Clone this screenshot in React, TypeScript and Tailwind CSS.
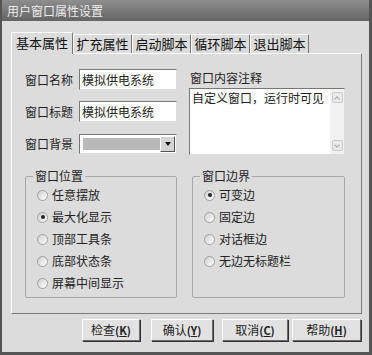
const font = { fontFamily: '"Noto Sans CJK SC", "Liberation Sans", sans-serif' };

function Radio({ label, checked }: { label: string; checked?: boolean }) {
    return (
        <div className="flex items-center h-[22px]">
            <div className="w-[11px] h-[11px] rounded-full border border-[#a0a0a0] bg-gradient-to-br from-[#cfcfcf] to-white flex items-center justify-center">
                {checked && <div className="w-[4px] h-[4px] rounded-full bg-[#222]"></div>}
            </div>
            <span className="ml-[4px] text-[12px] text-[#222] leading-none">{label}</span>
        </div>
    );
}

function Group({ title, items, width }: { title: string; items: [string, boolean][]; width: string }) {
    return (
        <fieldset className={`${width} h-[129px] border border-[#a8a8a8] rounded-[2px] pl-[11px]`}>
            <legend className="ml-[-4px] px-[2px] text-[12px] text-[#222] leading-[14px]">{title}</legend>
            <div className="mt-[1px]">
                {items.map(([t, c]) => (
                    <Radio key={t} label={t} checked={c} />
                ))}
            </div>
        </fieldset>
    );
}

function Btn({ label, hot, width }: { label: string; hot: string; width: string }) {
    return (
        <div
            className={`${width} h-[22px] border border-t-white border-l-white border-r-[#6a6a6a] border-b-[#6a6a6a] bg-[#e2e2e2] flex items-center justify-center text-[12px] text-[#222] leading-none shadow-[1px_1px_0_#333]`}
        >
            {label}
            <span className="text-[11px] font-bold">
                (<span className="underline">{hot}</span>)
            </span>
        </div>
    );
}

export default function App() {
    const tabs = ["扩充属性", "启动脚本", "循环脚本", "退出脚本"];
    return (
        <div
            className="w-[372px] h-[355px] bg-[#dcdcdc] border-l-2 border-r-[3px] border-b-[3px] border-[#555] flex flex-col"
            style={font}
        >
            <div className="h-[21px] bg-gradient-to-b from-[#8e8e8e] to-[#646464] flex items-center pl-[5px] text-[12px] text-[#ededed] leading-none">
                用户窗口属性设置
            </div>

            <div className="pl-[9px] pt-[10px]">
                <div className="flex items-end h-[22px] relative z-10">
                    <div className="w-[62px] h-[22px] border border-b-0 border-t-white border-l-white border-r-[#777] bg-[#dcdcdc] rounded-t-[2px] flex items-center justify-center text-[13px] text-[#111] mb-[-1px] pb-[1px]">
                        基本属性
                    </div>
                    {tabs.map((t) => (
                        <div
                            key={t}
                            className="w-[59px] h-[19px] border border-b-0 border-t-white border-l-white border-r-[#777] rounded-t-[2px] flex items-center justify-center text-[13px] text-[#111]"
                        >
                            {t}
                        </div>
                    ))}
                </div>

                <div className="w-[351px] h-[261px] border border-t-white border-l-white border-r-[#7a7a7a] border-b-[#7a7a7a] pl-[13px] pt-[14px]">
                    <div className="flex">
                        <div className="w-[152px] flex flex-col">
                            <div className="flex items-center h-[21px] mt-[1px]">
                                <span className="w-[54px] text-[12px] text-[#222]">窗口名称</span>
                                <div className="w-[98px] h-[21px] bg-white border border-t-[#777] border-l-[#777] border-r-[#ddd] border-b-[#ddd] text-[12px] text-[#222] leading-[19px] pl-[2px]">
                                    模拟供电系统
                                </div>
                            </div>
                            <div className="flex items-center h-[21px] mt-[11px]">
                                <span className="w-[54px] text-[12px] text-[#222]">窗口标题</span>
                                <div className="w-[98px] h-[21px] bg-white border border-t-[#777] border-l-[#777] border-r-[#ddd] border-b-[#ddd] text-[12px] text-[#222] leading-[19px] pl-[2px]">
                                    模拟供电系统
                                </div>
                            </div>
                            <div className="flex items-center h-[20px] mt-[12px]">
                                <span className="w-[54px] text-[12px] text-[#222]">窗口背景</span>
                                <div className="w-[98px] h-[20px] bg-white border border-t-[#777] border-l-[#777] border-r-[#ddd] border-b-[#ddd] flex items-center pl-[3px] pr-[1px]">
                                    <div className="w-[77px] h-[12px] bg-[#b9b9b9]"></div>
                                    <div className="ml-auto w-[15px] h-[16px] bg-[#d4d4d4] border border-t-white border-l-white border-r-[#555] border-b-[#555] flex items-center justify-center">
                                        <div className="w-0 h-0 border-l-[3px] border-r-[3px] border-t-[4px] border-l-transparent border-r-transparent border-t-[#111]"></div>
                                    </div>
                                </div>
                            </div>
                        </div>

                        <div className="ml-[12px] w-[156px] flex flex-col">
                            <span className="text-[12px] text-[#222] leading-[16px] mt-[2px] ml-[1px]">窗口内容注释</span>
                            <div className="mt-[2px] h-[67px] bg-white border border-t-[#777] border-l-[#777] border-r-[#ddd] border-b-[#ddd] flex">
                                <div className="flex-1 text-[12px] text-[#222] leading-[16px] pl-[2px] pt-[1px] whitespace-nowrap">
                                    自定义窗口，运行时可见
                                </div>
                                <div className="w-[14px] bg-[#f2f2f2] flex flex-col justify-between items-center py-[3px]">
                                    <div className="w-[11px] h-[11px] bg-[#eaeaea] border border-[#ccc] rounded-[2px] flex items-center justify-center">
                                        <div className="w-[4px] h-[4px] border-t border-l border-[#aaa] rotate-45 mt-[2px]"></div>
                                    </div>
                                    <div className="w-[11px] h-[11px] bg-[#eaeaea] border border-[#ccc] rounded-[2px] flex items-center justify-center">
                                        <div className="w-[4px] h-[4px] border-b border-r border-[#aaa] rotate-45 mb-[2px]"></div>
                                    </div>
                                </div>
                            </div>
                        </div>
                    </div>

                    <div className="flex mt-[14px]">
                        <Group
                            title="窗口位置"
                            width="w-[152px]"
                            items={[
                                ["任意摆放", false],
                                ["最大化显示", true],
                                ["顶部工具条", false],
                                ["底部状态条", false],
                                ["屏幕中间显示", false],
                            ]}
                        />
                        <div className="w-[15px]"></div>
                        <Group
                            title="窗口边界"
                            width="w-[153px]"
                            items={[
                                ["可变边", true],
                                ["固定边", false],
                                ["对话框边", false],
                                ["无边无标题栏", false],
                            ]}
                        />
                    </div>
                </div>

                <div className="flex mt-[5px] ml-[71px]">
                    <Btn label="检查" hot="K" width="w-[58px]" />
                    <div className="w-[11px]"></div>
                    <Btn label="确认" hot="Y" width="w-[62px]" />
                    <div className="w-[9px]"></div>
                    <Btn label="取消" hot="C" width="w-[66px]" />
                    <div className="w-[4px]"></div>
                    <Btn label="帮助" hot="H" width="w-[69px]" />
                </div>
            </div>
        </div>
    );
}
